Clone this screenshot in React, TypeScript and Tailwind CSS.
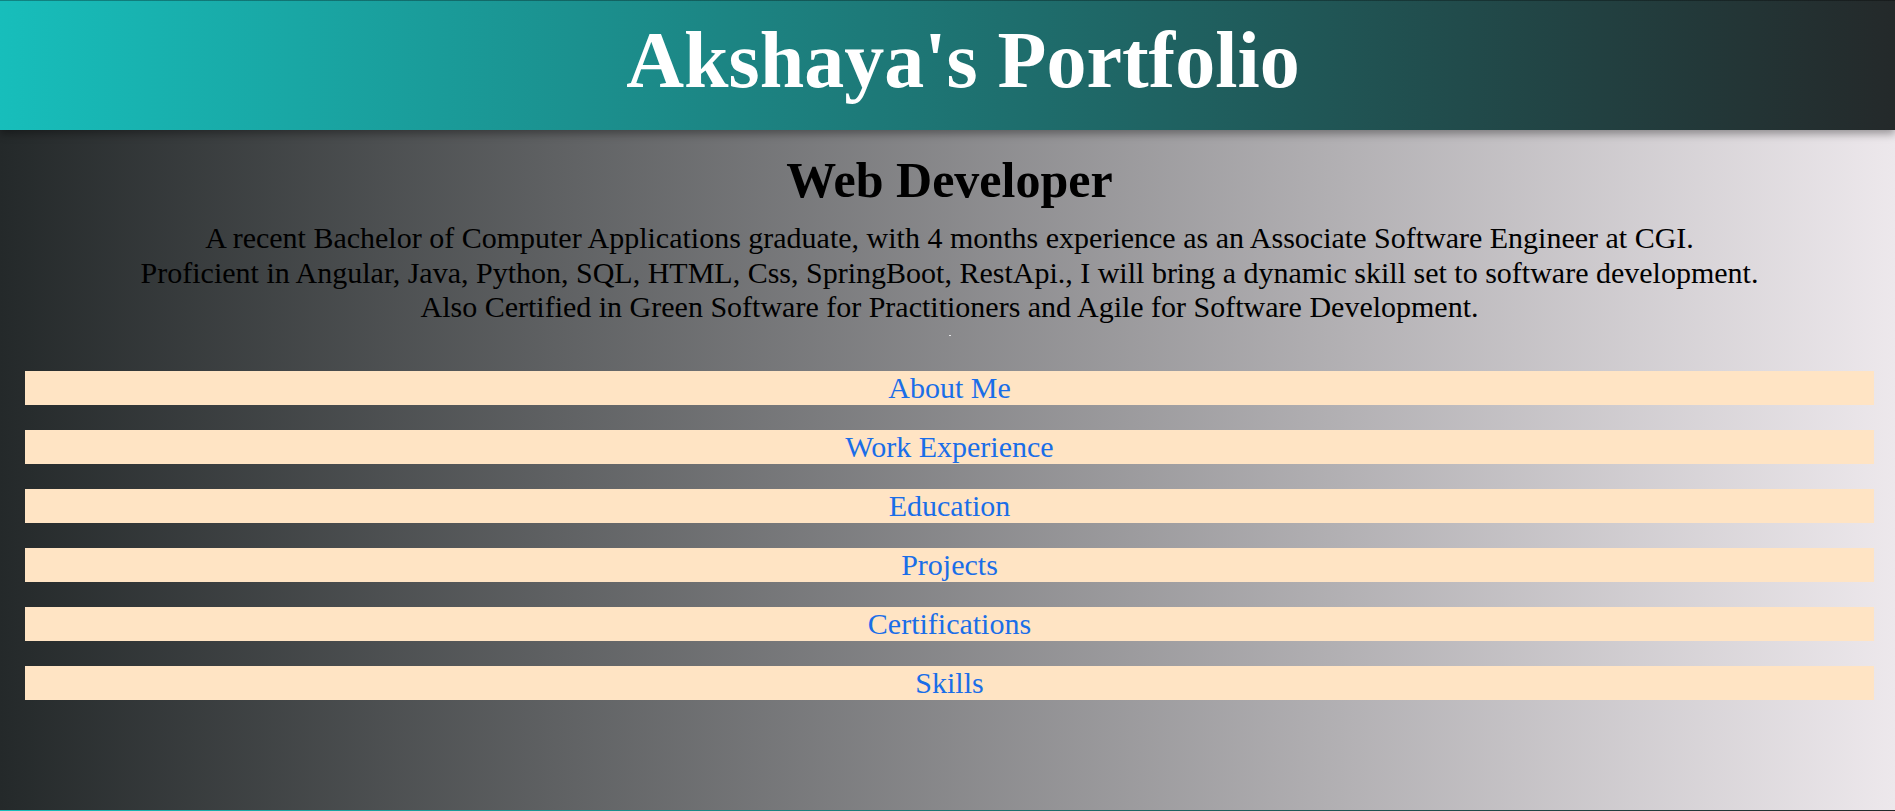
import React from "react";

type NavItemProps = {
  label: string;
  href: string;
};

const navItems: NavItemProps[] = [
  { label: "About Me", href: "#about" },
  { label: "Work Experience", href: "#experience" },
  { label: "Education", href: "#education" },
  { label: "Projects", href: "#projects" },
  { label: "Certifications", href: "#certifications" },
  { label: "Skills", href: "#skills" },
];

const NavItem = ({ label, href }: NavItemProps) => {
  return (
    <li className="h-[34px] bg-[#ffe4c4] text-center leading-[34px]">
      <a href={href} className="text-[30px] text-[#1a6ee8]">
        {label}
      </a>
    </li>
  );
};

const App = () => {
  return (
    <div className="min-h-screen font-['Liberation_Serif','Times_New_Roman',serif]">
      <header className="relative z-10 h-[130px] border-t border-black/30 bg-[linear-gradient(to_right,#17bebb,#24292a)] pt-[13px] pl-[31px] text-center shadow-[0_4px_8px_rgba(0,0,0,0.35)]">
        <h1 className="text-[80px] font-bold leading-[92px] text-white">
          Akshaya's Portfolio
        </h1>
      </header>

      <main className="flex h-[680px] flex-col bg-[linear-gradient(to_right,#24292a,#ede8ec)] pt-[22px] pl-[25px] pr-[21px] text-center text-black">
        <h2 className="text-[50px] font-bold leading-[56px]">Web Developer</h2>
        <p className="mt-[13px] text-[30px] leading-[34.5px]">
          A recent Bachelor of Computer Applications graduate, with 4 months
          experience as an Associate Software Engineer at CGI.
          <br />
          Proficient in Angular, Java, Python, SQL, HTML, Css, SpringBoot,
          RestApi., I will bring a dynamic skill set to software development.
          <br />
          Also Certified in Green Software for Practitioners and Agile for
          Software Development.
        </p>
        <span className="mx-auto mt-[10px] h-[1px] w-[2px] bg-white/80" />

        <ul className="mt-[35px] flex flex-col gap-[25px]">
          {navItems.map((item) => (
            <NavItem key={item.href} label={item.label} href={item.href} />
          ))}
        </ul>
      </main>

      <footer className="h-[60px] bg-[linear-gradient(to_right,#17bebb,#24292a)]" />
    </div>
  );
};

export default App;
